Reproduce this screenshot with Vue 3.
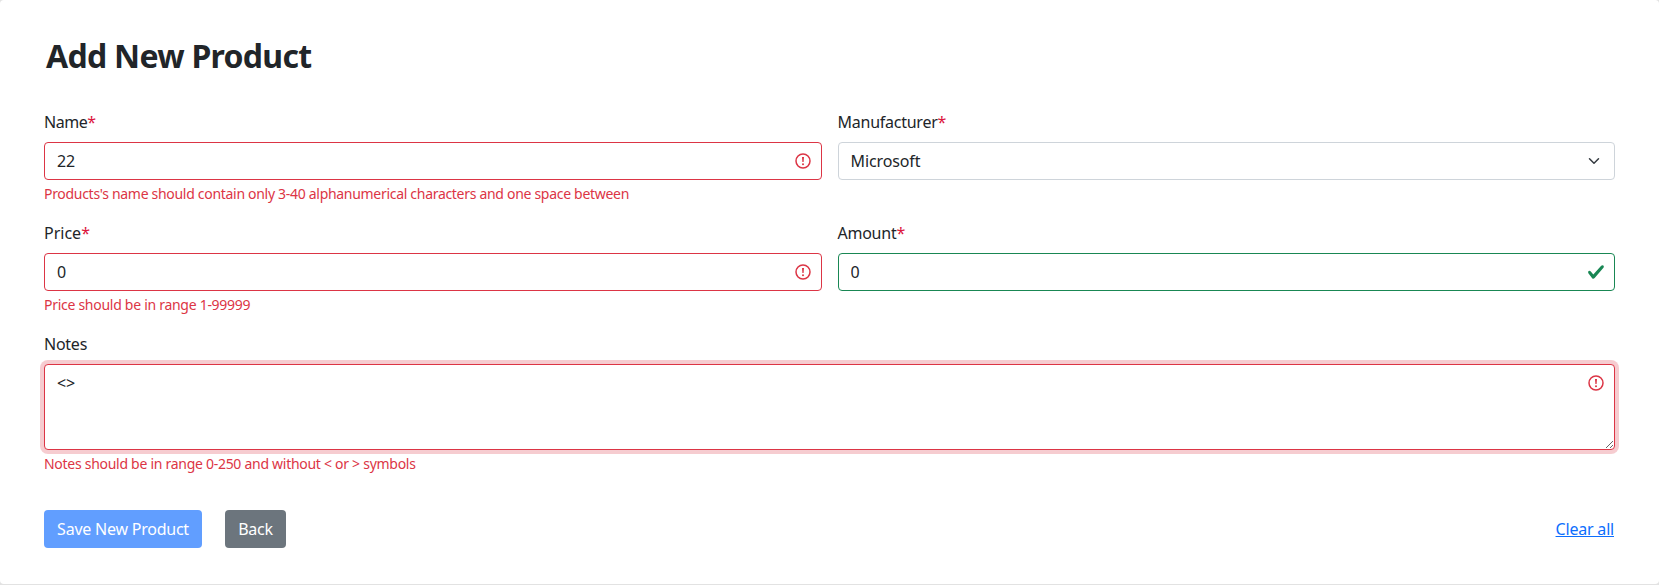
<script setup>
import { ref } from 'vue'

const name = ref('22')
const price = ref('0')
const amount = ref('0')
const notes = ref('<>')
</script>

<template>
  <main class="page">
    <form class="card" @submit.prevent>
      <h1 class="title">Add New Product</h1>

      <div class="row">
        <div class="field">
          <label class="label l-name">Name<span class="star">*</span></label>
          <div class="control">
            <input v-model="name" class="input invalid" type="text" />
            <svg class="icon" viewBox="0 0 18 18"><circle cx="9" cy="9" r="7" fill="none" stroke="#dc3545" stroke-width="1.5" /><path fill="#dc3545" d="M8 5h2l-.4 5H8.4z" /><circle cx="9" cy="12.2" r="1" fill="#dc3545" /></svg>
          </div>
          <div class="feedback f-name">Products's name should contain only 3-40 alphanumerical characters and one space between</div>
        </div>
        <div class="field">
          <label class="label l-manufacturer">Manufacturer<span class="star">*</span></label>
          <div class="control">
            <select class="input select"><option>Microsoft</option></select>
            <svg class="chevron" viewBox="0 0 16 16" fill="none" stroke="#343a40" stroke-linecap="round" stroke-linejoin="round" stroke-width="2"><path d="M2 5l6 6 6-6" /></svg>
          </div>
        </div>
      </div>

      <div class="row">
        <div class="field">
          <label class="label l-price">Price<span class="star">*</span></label>
          <div class="control">
            <input v-model="price" class="input invalid" type="text" />
            <svg class="icon" viewBox="0 0 18 18"><circle cx="9" cy="9" r="7" fill="none" stroke="#dc3545" stroke-width="1.5" /><path fill="#dc3545" d="M8 5h2l-.4 5H8.4z" /><circle cx="9" cy="12.2" r="1" fill="#dc3545" /></svg>
          </div>
          <div class="feedback">Price should be in range 1-99999</div>
        </div>
        <div class="field">
          <label class="label l-amount">Amount<span class="star">*</span></label>
          <div class="control">
            <input v-model="amount" class="input valid" type="text" />
            <svg class="icon" viewBox="0 0 8 8"><path fill="#198754" d="M2.3 6.73L.6 4.53c-.4-1.04.46-1.4 1.1-.8l1.1 1.4 3.4-3.8c.6-.63 1.6-.27 1.2.7l-4 4.6c-.43.5-.8.4-1.1.1z" /></svg>
          </div>
        </div>
      </div>

      <div class="field">
        <label class="label l-notes">Notes</label>
        <div class="control">
          <textarea v-model="notes" class="input notes invalid"></textarea>
          <svg class="icon" viewBox="0 0 18 18"><circle cx="9" cy="9" r="7" fill="none" stroke="#dc3545" stroke-width="1.5" /><path fill="#dc3545" d="M8 5h2l-.4 5H8.4z" /><circle cx="9" cy="12.2" r="1" fill="#dc3545" /></svg>
        </div>
        <div class="feedback">Notes should be in range 0-250 and without &lt; or &gt; symbols</div>
      </div>

      <div class="actions">
        <button class="btn save" type="submit" disabled>Save New Product</button>
        <button class="btn back" type="button">Back</button>
        <a class="clear" href="#">Clear all</a>
      </div>
    </form>
  </main>
</template>

<style>
body { margin: 0; background: #fff; overflow: hidden; }
</style>

<style scoped>
* { box-sizing: border-box; }
.page { height: 585px; background: #e2e2e2; font: 16px/24px "Noto Sans", "Open Sans", sans-serif; color: #212529; }
.card { height: 584px; padding: 37px 44px 0; border-radius: 4px; background: #fff; }
.title { height: 38px; margin: 0 0 35px 2px; font-size: 32px; line-height: 38px; font-weight: 700; letter-spacing: -.71px; white-space: nowrap; }
.row { display: grid; grid-template-columns: 1fr 1fr; gap: 16px; margin-bottom: 16px; }
.label { display: block; height: 24px; margin-bottom: 8px; letter-spacing: -.25px; white-space: nowrap; }
.l-name { letter-spacing: -.45px; }
.l-price { letter-spacing: 0; }
.star { color: #dc143c; }
.control { position: relative; }
.input { display: block; width: 100%; height: 38px; margin: 0; padding: 6px 12px; border: 1px solid #ced4da; border-radius: 4px; background: #fff; color: #212529; font: inherit; letter-spacing: -.12px; appearance: none; outline: 0; }
.invalid { border-color: #dc3545; }
.valid { border-color: #198754; }
.notes { height: 86px; resize: vertical; box-shadow: 0 0 0 4px rgba(220, 53, 69, .25); }
.icon { position: absolute; top: 10px; right: 10px; width: 18px; height: 18px; }
.chevron { position: absolute; top: 13px; right: 15px; width: 12px; height: 12px; }
.feedback { height: 21px; margin-top: 4px; font-size: 14px; line-height: 19px; letter-spacing: -.28px; color: #dc3545; white-space: nowrap; }
.f-name { letter-spacing: -.3px; }
.actions { display: flex; align-items: center; margin-top: 35px; }
.btn { height: 38px; padding: 0; border: 0; border-radius: 4px; color: #fff; font: inherit; letter-spacing: -.23px; white-space: nowrap; }
.save { width: 158px; background: #619eff; }
.back { width: 61px; margin-left: 23px; background: #6c757d; }
.clear { margin: 0 1px 0 auto; color: #0d6efd; letter-spacing: -.2px; text-decoration: underline; }
</style>
